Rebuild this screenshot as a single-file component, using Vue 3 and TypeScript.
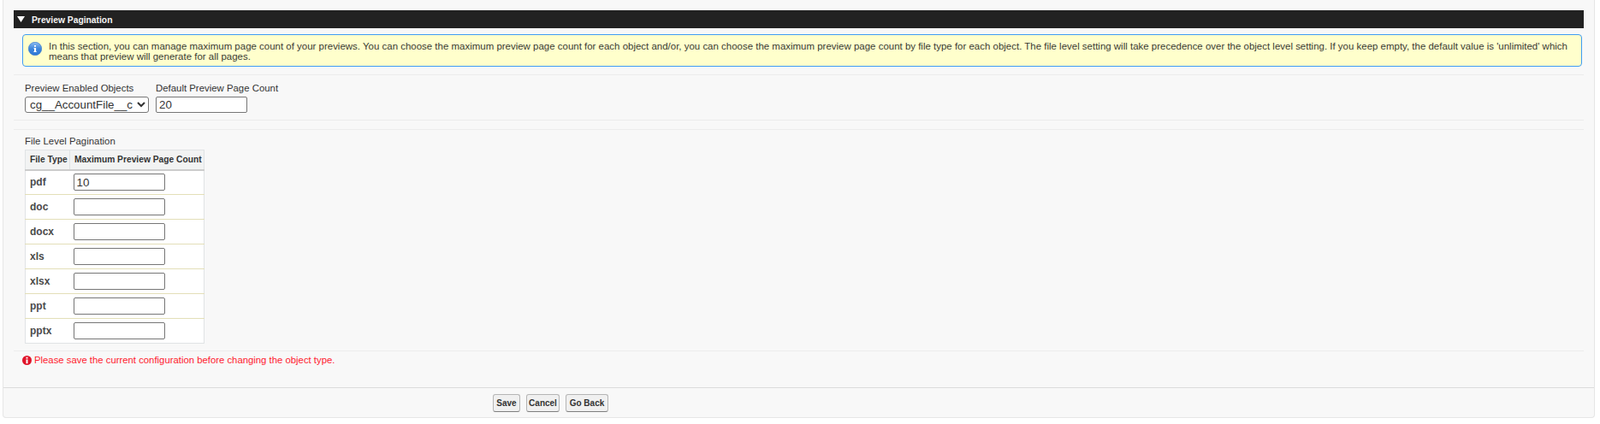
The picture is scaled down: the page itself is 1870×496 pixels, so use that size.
<script setup lang="ts">
const rows: { type: string; value: string }[] = [
  { type: 'pdf', value: '10' },
  { type: 'doc', value: '' },
  { type: 'docx', value: '' },
  { type: 'xls', value: '' },
  { type: 'xlsx', value: '' },
  { type: 'ppt', value: '' },
  { type: 'pptx', value: '' },
]
</script>

<template>
  <div class="page">
    <div class="panel">
      <div class="body">
        <div class="section-head">
          <svg class="tri" width="9" height="7" viewBox="0 0 9 7"><path d="M0 0h9L4.5 7z" fill="#fff" /></svg>
          <span>Preview Pagination</span>
        </div>
        <div class="info">
          <svg class="info-icon" width="16" height="16" viewBox="0 0 16 16">
            <defs>
              <linearGradient id="gloss" x1="0" y1="0" x2="0" y2="1">
                <stop offset="0" stop-color="#8fbdf0" />
                <stop offset="0.5" stop-color="#3f86dc" />
                <stop offset="1" stop-color="#2f78d6" />
              </linearGradient>
            </defs>
            <circle cx="8" cy="8" r="7.7" fill="url(#gloss)" stroke="#2a6fc9" stroke-width="0.6" />
            <path d="M7 4h2v1.7H7zM6.4 7h2.7v4.2h.8V12H6.2v-.8H7V7.8h-.6z" fill="#fff" />
          </svg>
          <p>In this section, you can manage maximum page count of your previews. You can choose the maximum preview page count for each object and/or, you can choose the maximum preview page count by file type for each object. The file level setting will take precedence over the object level setting. If you keep empty, the default value is 'unlimited' which means that preview will generate for all pages.</p>
        </div>
        <hr class="sep first" />
        <div class="fields">
          <label class="field">
            <span>Preview Enabled Objects</span>
            <select class="select">
              <option>cg__AccountFile__c</option>
            </select>
          </label>
          <label class="field">
            <span>Default Preview Page Count</span>
            <input class="input count" type="text" value="20" />
          </label>
        </div>
        <hr class="sep second" />
        <hr class="sep third" />
        <div class="file-level">
          <div class="caption">File Level Pagination</div>
          <table class="grid">
            <thead>
              <tr>
                <th class="c1">File Type</th>
                <th class="c2">Maximum Preview Page Count</th>
              </tr>
            </thead>
            <tbody>
              <tr v-for="row in rows" :key="row.type">
                <td class="type">{{ row.type }}</td>
                <td class="val"><input class="input cell" type="text" :value="row.value" /></td>
              </tr>
            </tbody>
          </table>
        </div>
        <hr class="sep fourth" />
        <div class="error">
          <svg width="11" height="11" viewBox="0 0 11 11">
            <circle cx="5.5" cy="5.5" r="5.5" fill="#e0142a" />
            <path d="M4.5 1.8h2v1.7h-2zM4.5 4.4h2V9.2h-2z" fill="#fff" />
          </svg>
          <span>Please save the current configuration before changing the object type.</span>
        </div>
      </div>
      <div class="footer">
        <button class="btn save" type="button">Save</button>
        <button class="btn cancel" type="button">Cancel</button>
        <button class="btn back" type="button">Go Back</button>
      </div>
    </div>
  </div>
</template>

<style>
html, body { margin: 0; background: #fff; }
</style>

<style scoped>
.page {
  width: 1870px;
  height: 496px;
  box-sizing: border-box;
  padding-right: 6px;
  background: #fff;
  font-family: "Liberation Sans", Arial, sans-serif;
  font-size: 11.4px;
  color: #333;
  overflow: hidden;
}
.panel {
  height: 489px;
  box-sizing: border-box;
  margin-left: 3px;
  width: 1861px;
  background: #f8f8f8;
  border: 1px solid #e6e6e6;
  border-top: 0;
  border-radius: 0 0 4px 4px;
  display: flex;
  flex-direction: column;
}
.body {
  height: 454px;
  box-sizing: border-box;
  padding: 12px 12px 0;
  border-bottom: 1px solid #dcdcdc;
}
.section-head {
  height: 21px;
  background: #222;
  color: #f4f4f4;
  font-weight: 700;
  font-size: 10.3px;
  display: flex;
  align-items: center;
  gap: 8px;
  padding-left: 4px;
}
.section-head span { padding-top: 1px; }
.tri { margin-top: -1px; }
.info {
  margin: 7px 2px 0 10px;
  height: 38px;
  box-sizing: border-box;
  background: #ffffcc;
  border: 1px solid #3f9cf3;
  border-radius: 4px;
  display: flex;
  align-items: flex-start;
  padding: 7px 0 0 6px;
  gap: 8px;
}
.info-icon { flex: none; margin-top: 1px; }
.info p {
  margin: 0;
  font-size: 11.48px;
  line-height: 12px;
  width: 1790px;
  color: #3a3a32;
}
.sep {
  border: 0;
  height: 1px;
  background: #ececec;
  margin: 0;
}
.sep.first { margin-top: 9px; }
.sep.second { margin-top: 0; }
.sep.third { margin-top: 10px; }
.sep.fourth { margin-top: 8px; }
.fields {
  display: flex;
  gap: 8px;
  padding: 9px 0 9px 13px;
  height: 52px;
  box-sizing: border-box;
}
.field {
  display: flex;
  flex-direction: column;
  gap: 3px;
  line-height: 13px;
  color: #333;
}
.select {
  width: 145px;
  height: 19px;
  box-sizing: border-box;
  border: 1px solid #767676;
  border-radius: 3px;
  background: #fff;
  padding: 0 0 0 1px;
  font-family: "Liberation Sans", Arial, sans-serif;
  font-size: 13.33px;
  color: #333;
}
.input {
  box-sizing: border-box;
  height: 20px;
  border: 1px solid #767676;
  border-radius: 2px;
  background: #fff;
  padding: 1px 3px;
  font-family: "Liberation Sans", Arial, sans-serif;
  font-size: 13.33px;
  color: #333;
}
.count { width: 107px; height: 20px; }
.cell { width: 107px; display: block; }
.file-level { padding: 7px 0 0 13px; }
.caption { line-height: 13px; margin-bottom: 3px; }
.grid {
  border-collapse: collapse;
  width: 210px;
  background: #fff;
  border: 1px solid #e0e3e5;
  table-layout: fixed;
}
.grid th {
  height: 23px;
  padding: 0 0 0 5px;
  box-sizing: border-box;
  background: #f2f3f3;
  border: 1px solid #e0e3e5;
  border-bottom: 2px solid #cccccc;
  text-align: left;
  font-size: 10.25px;
  font-weight: 700;
  color: #333;
  white-space: nowrap;
}
.c1 { width: 52px; }
.grid td {
  height: 29px;
  box-sizing: border-box;
  padding: 0;
  border-bottom: 1px solid #e3dfb8;
}
.grid tr:last-child td { border-bottom: 0; }
.type {
  padding-left: 5px !important;
  font-weight: 700;
  font-size: 12px;
  color: #4a4a4a;
}
.val { padding-left: 4px !important; }
.error {
  display: flex;
  align-items: center;
  gap: 3px;
  padding: 4px 0 0 10px;
  font-size: 11.33px;
  color: #ff1a2e;
  line-height: 13px;
}
.footer {
  flex: 1;
  display: flex;
  align-items: flex-start;
  gap: 7px;
  padding: 7px 0 0 572px;
}
.btn {
  height: 21px;
  box-sizing: border-box;
  padding: 0;
  border: 1px solid #b5b5b5;
  border-bottom-color: #7f7f7f;
  border-radius: 3px;
  background: #f0f0f0;
  font-family: "Liberation Sans", Arial, sans-serif;
  font-size: 10px;
  font-weight: 700;
  color: #333;
  text-align: center;
}
.save { width: 32px; }
.cancel { width: 39px; }
.back { width: 50px; }
</style>
